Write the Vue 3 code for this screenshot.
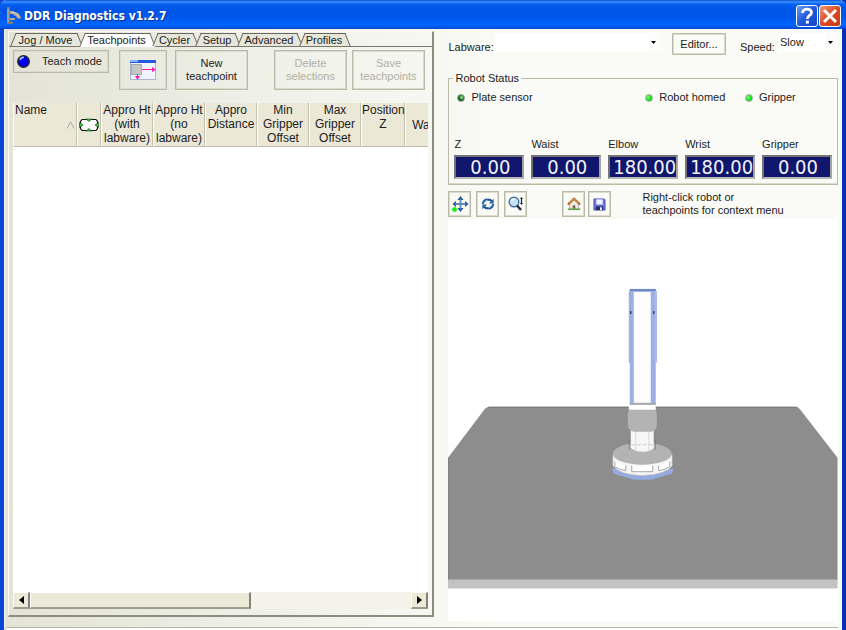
<script setup>
import { ref } from 'vue'

const tabs = ['Jog / Move', 'Teachpoints', 'Cycler', 'Setup', 'Advanced', 'Profiles']
const activeTab = ref('Teachpoints')
const labware = ref('')
const speed = ref('Slow')

const columns = [
  ['Appro Ht', '(with', 'labware)'],
  ['Appro Ht', '(no', 'labware)'],
  ['Appro', 'Distance'],
  ['Min', 'Gripper', 'Offset'],
  ['Max', 'Gripper', 'Offset'],
  ['Position', 'Z'],
]

const axes = [
  { name: 'Z', value: '0.00' },
  { name: 'Waist', value: '0.00' },
  { name: 'Elbow', value: '180.00' },
  { name: 'Wrist', value: '180.00' },
  { name: 'Gripper', value: '0.00' },
]
</script>

<template>
  <div class="window">
    <header class="titlebar">
      <svg class="app-icon" width="16" height="18" viewBox="0 0 16 18">
        <path d="M1 0h3v14l3 1v2H1z" fill="#777d86" />
        <path d="M2 2v13" stroke="#c9c0ac" fill="none" />
        <path d="M4 4h4v3H4zM8 5l4 1 3 4-1 2-3-1-1-2-3-1z" fill="#b3aa9b" />
        <path d="M4 11h5v2H4z" fill="#b3aa9b" /><path d="M5 5l5 1 3 4" stroke="#ddd2bd" fill="none" />
      </svg>
      <h1>DDR Diagnostics v1.2.7</h1>
      <button class="caption help" aria-label="Help">
        <svg width="20" height="20" viewBox="0 0 20 20"><path d="M5.500 7c0-5 9-5 9-.5 0 3-4.200 3-4.200 6.500" fill="none" stroke="#fff" stroke-width="2.800" /><rect x="8.800" y="14.600" width="3" height="3" fill="#fff" /></svg>
      </button>
      <button class="caption close" aria-label="Close">
        <svg width="20" height="20" viewBox="0 0 20 20"><path d="M4 4l12 12M16 4L4 16" stroke="#fff" stroke-width="3" /></svg>
      </button>
    </header>

    <main class="body">
      <section class="notebook">
        <nav class="tabs" role="tablist">
          <button v-for="t in tabs" :key="t" role="tab" class="tab" :class="{ active: t === activeTab }" :aria-selected="t === activeTab" @click="activeTab = t"><span>{{ t }}</span></button>
        </nav>
        <div class="page">
          <div class="actions">
            <button class="btn teach">
              <svg width="15" height="15" viewBox="0 0 15 15"><circle cx="7.500" cy="7.500" r="6.500" fill="#25252d" /><circle cx="7.500" cy="7.500" r="5" fill="#0000f0" /><path d="M4 6q1-3 4-2.500" stroke="#a5b9ff" stroke-width="1.600" fill="none" /></svg>
              <span>Teach mode</span>
            </button>
            <button class="btn tall picture" aria-label="Approach settings">
              <svg width="28" height="22" viewBox="0 0 28 22">
                <rect x="1.500" y="1.500" width="25" height="19" fill="#f3f3fb" stroke="#aeb5ce" />
                <rect x="1" y="1" width="26" height="3" fill="#2358df" /><rect x="1" y="1" width="8" height="2" fill="#7db4ff" />
                <rect x="2.500" y="5.500" width="10" height="10" fill="#c6c6c6" stroke="#aaa" />
                <path d="M13 10.500h12M8.500 15v5" stroke="#f51bbd" /><path d="M23 8l4 2.500-4 2.500zM6 17h5l-2.500 4z" fill="#f51bbd" />
              </svg>
            </button>
            <button class="btn tall">New<br>teachpoint</button>
            <button class="btn tall apart" disabled>Delete<br>selections</button>
            <button class="btn tall near" disabled>Save<br>teachpoints</button>
          </div>

          <div class="grid">
            <table>
              <colgroup><col class="c-name"><col class="c-icon"><col v-for="n in 5" :key="n" class="c-value"><col class="c-pos"><col class="c-pos"></colgroup>
              <thead>
                <tr>
                  <th class="name"><span>Name</span><svg width="9" height="8" viewBox="0 0 9 8"><path d="M1 7.500L4.500.800 8 7.500" fill="none" stroke="#aaa899" /></svg></th>
                  <th class="plate" aria-label="Plate">
                    <svg width="20" height="14" viewBox="0 0 20 14">
                      <path d="M3 1.500h14l1.500 2v7l-1.500 2H3l-1.500-2v-7z" fill="#fff" stroke="#111" stroke-width="1.200" />
                      <path d="M7 1l3 2.500L13 1zM7 13l3-2.500L13 13zM.500 4.500l3.500 2.500-3.500 2.500zM19.500 4.500L16 7l3.500 2.500z" fill="#38c93c" stroke="#163b17" stroke-width=".6" />
                    </svg>
                  </th>
                  <th v-for="(c, i) in columns" :key="i"><template v-for="(line, j) in c" :key="j">{{ line }}<br></template></th>
                  <th class="cut">Waist</th>
                </tr>
              </thead>
            </table>
            <div class="rows"></div>
            <div class="scrollbar">
              <button class="arrow" aria-label="Scroll left"><svg width="5" height="8" viewBox="0 0 5 8"><path d="M5 0v8L0 4z" /></svg></button>
              <div class="track"><div class="thumb"></div></div>
              <button class="arrow" aria-label="Scroll right"><svg width="5" height="8" viewBox="0 0 5 8"><path d="M0 0v8l5-4z" /></svg></button>
            </div>
          </div>
        </div>
      </section>

      <section class="side">
        <div class="options">
          <label for="labware">Labware:</label>
          <span class="combo wide">
            <select id="labware" v-model="labware"><option value=""></option></select>
            <svg width="5" height="3" viewBox="0 0 5 3"><path d="M0 0h5L2.500 3z" /></svg>
          </span>
          <button class="btn editor">Editor...</button>
          <label for="speed">Speed:</label>
          <span class="combo">
            <select id="speed" v-model="speed"><option>Slow</option><option>Medium</option><option>Fast</option></select>
            <svg width="5" height="3" viewBox="0 0 5 3"><path d="M0 0h5L2.500 3z" /></svg>
          </span>
        </div>

        <fieldset class="status">
          <legend>Robot Status</legend>
          <div class="leds">
            <span class="led dark"><i></i>Plate sensor</span>
            <span class="led"><i></i>Robot homed</span>
            <span class="led"><i></i>Gripper</span>
          </div>
          <div class="axes">
            <div v-for="a in axes" :key="a.name" class="axis">
              <span>{{ a.name }}</span>
              <output class="lcd" :class="{ full: a.value.length > 5 }" :aria-label="a.name">{{ a.value }}</output>
            </div>
          </div>
        </fieldset>

        <div class="toolbar">
          <button class="btn tool" aria-label="Pan">
            <svg width="18" height="18" viewBox="0 0 18 18"><path d="M9.500 3v12M3 9h13" stroke="#255796" stroke-width="1.600" /><path d="M6.500 5l3-4 3 4zM6.500 13l3 4 3-4zM5 6L1.500 9 5 12zM14 6l3.500 3-3.500 3z" fill="#255796" /><path d="M9.500 4v10M4 9h11" stroke="#79a8da" stroke-width=".7" /><path d="M3.500 12L6 14.500 3.500 17 1 14.500z" fill="#10f010" stroke="#10f010" /></svg>
          </button>
          <button class="btn tool" aria-label="Rotate">
            <svg width="14" height="14" viewBox="0 0 16 16"><path d="M2 8Q3 3 8 3q3 0 4.500 2M14 8q-1 5-6 5-3 0-4.500-2" fill="none" stroke="#205398" stroke-width="2.400" /><path d="M14.500 2v5.500H9zM1.500 14V8.500H7z" fill="#2864a8" /><path d="M3 7q1-3 5-3.500M13 9q-1 3-5 3.500" fill="none" stroke="#85bce8" /></svg>
          </button>
          <button class="btn tool" aria-label="Zoom">
            <svg width="18" height="18" viewBox="0 0 18 18"><circle cx="7" cy="7" r="4.800" fill="#c4e2f6" stroke="#456f9a" stroke-width="1.400" /><path d="M10 10.500l4 4.500" stroke="#26313f" stroke-width="2.600" /><path d="M4.500 6Q5 4 7.500 4" fill="none" stroke="#fff" stroke-width="1.300" /><path d="M14.500 3v6" stroke="#222" stroke-width="1.200" /><path d="M13 4l1.500-2L16 4zM13 8l1.500 2L16 8z" fill="#222" /></svg>
          </button>
          <button class="btn tool home" aria-label="Home">
            <svg width="14" height="14" viewBox="0 0 16 16"><path d="M3 8l5-5 5 5v6H3z" fill="#eeebe0" stroke="#9c9990" stroke-width=".8" /><path d="M1 8.500L8 2l7 6.500" fill="none" stroke="#a86625" stroke-width="2.400" /><path d="M2.500 7L8 2l5.500 5" fill="none" stroke="#e9aa60" /><path d="M6.500 14V9.500h3V14z" fill="#756756" /><path d="M1 14h14" stroke="#6ca64d" stroke-width="2" /></svg>
          </button>
          <button class="btn tool save" aria-label="Save">
            <svg width="13" height="13" viewBox="0 0 14 14"><path d="M1 1h11l1 1v11H1z" fill="#6d78d6" stroke="#4a55b4" /><path d="M3.500 1.500h7V7h-7z" fill="#eef2ff" /><path d="M3 9h8v4H3z" fill="#252c64" /><path d="M7.500 10h2v3h-2z" fill="#f5f5ff" /></svg>
          </button>
          <p>Right-click robot or<br>teachpoints for context menu</p>
        </div>

        <div class="view">
          <svg viewBox="0 0 390 402" role="img" aria-label="Robot view">
            <path d="M0 239L37 190Q39 188 42 188H346Q350 188 352 190L390 239V361H0z" fill="#8d8d8d" />
            <path d="M40 188.500H350" stroke="#777" stroke-width="1" />
            <path d="M0 361H390V370H0z" fill="#c3c3c3" /><path d="M0 361H390" stroke="#a8a8a8" /><path d="M0 361V239" stroke="#777" />
            <path d="M164 250l2 5 14 4 6 2h18l6-2 14-4 2-5z" fill="#94aae0" />
            <path d="M165 236v11q6 9 29.500 10 24-1 30-10v-11z" fill="#f5f5f5" stroke="#aaa" stroke-width=".6" />
            <path d="M167 243v5q4 3 11 4v-5M222 243v5q-4 3-11 4v-5M184 247v6h21v-6" fill="#fff" stroke="#a5a5a5" />
            <ellipse cx="194.500" cy="235" rx="29.500" ry="11" fill="#b3b3b3" />
            <path d="M183 208v21q4 4 12 4t11-4v-21z" fill="#f6f6f6" /><path d="M188 212v20M201 212v20" stroke="#d9d9d9" /><path d="M183 226h23" stroke="#ccc" stroke-dasharray="4 2" />
            <path d="M181.500 221v10M207.500 221v10" stroke="#777" stroke-width=".8" />
            <path d="M181 191h27l1 4v12q-1 6-6 6h-17q-5-1-6-6v-12z" fill="#b3b3b3" />
            <path d="M181 185h27v6h-27z" fill="#fff" />
            <path d="M182 70h26v116h-26z" fill="#9cb0e4" /><path d="M186 73h17v112h-17z" fill="#fdfdfd" />
            <path d="M181.500 72v72M208.500 72v72" stroke="#8da3d8" />
            <path d="M182 71h26" stroke="#6f87bd" stroke-width="2" /><path d="M183 92v3M206 92v3" stroke="#35466d" stroke-width="1.500" /><path d="M182 185h26" stroke="#aaa" stroke-width="2" />
          </svg>
        </div>
      </section>
    </main>
    <footer class="log"></footer>
  </div>
</template>

<style>
body { margin: 0; }
</style>

<style scoped>
* { box-sizing: border-box; }
.window {
  min-height: 100vh;
  display: flex;
  flex-direction: column;
  font: 11px/13px "Liberation Sans", Arial, sans-serif;
  color: #1c1c1c;
  border: solid #0746d6;
  border-width: 0 4px;
  border-right-color: #0330b8;
  background: linear-gradient(90deg, #e3e4d6, #fafbf6 60%);
}
button, select { font: inherit; color: inherit; margin: 0; padding: 0; border: 0; }
svg { display: block; }
.titlebar {
  height: 29px;
  margin: 0 -4px;
  padding: 3px 5px 0 6px;
  display: flex;
  align-items: center;
  background: linear-gradient(#0a4fd5, #3a92ff 2px, #0560f2 4px, #0054e5 10px, #0058ee 18px, #0066ff 25px, #0047d0);
  border-radius: 6px 6px 0 0;
}
h1 { flex: 1; margin: 0 0 0 2px; color: #fff; font: bold 12px/16px "DejaVu Sans Condensed", sans-serif; text-shadow: 1px 1px #0b318f; }
.caption {
  width: 22px;
  height: 22px;
  margin-left: 1px;
  border: 1px solid #fff;
  border-radius: 3px;
  background: linear-gradient(135deg, #6b9bf5, #2158db 50%, #1747c4);
}
.close { background: linear-gradient(135deg, #f09a7e, #dd4a25 50%, #c53a13); }
.body { flex: 1; display: grid; grid-template-columns: 426fr 390fr; gap: 14px; padding: 2px 4px 6px; border-left: 1px solid #f5f3e5; }
.body > * { min-width: 0; }
.notebook {
  margin: 0 0 4px -1px;
  display: flex;
  flex-direction: column;
  border: 1px solid #fbfbf7;
  border-right: 2px solid #8f8c7d;
  border-bottom: 2px solid #8f8c7d;
}
.tabs { height: 14px; margin-top: 1px; padding-left: 2px; display: grid; grid-template-columns: 69px 73px 43px 42px 62px 48px; border-bottom: 1px solid #77776c; }
.tab { position: relative; height: 14px; background: none; line-height: 14px; white-space: nowrap; }
.tab span { position: relative; z-index: 1; display: block; }
.tab::before, .tab::after { content: ""; position: absolute; top: 0; bottom: 1px; border-top: 1px solid #66665e; background: #e6e7da; }
.tab::before { left: 2px; right: 50%; border-left: 1px solid #66665e; transform: skewX(-22deg); }
.tab::after { right: 0; left: 40%; border-right: 1px solid #66665e; transform: skewX(22deg); }
.tab.active::before, .tab.active::after { background: #fff; bottom: 0; }
.page { flex: 1; display: flex; flex-direction: column; padding: 3px 4px 6px; }
.actions { display: flex; align-items: flex-start; gap: 8px; height: 53px; }
.btn { border: 1px solid #babaa8; border-radius: 0; background: transparent; box-shadow: inset 0 0 0 1px #dadacd; white-space: nowrap; }
.teach { width: 96px; height: 23px; margin: 0 2px 0 0; display: flex; align-items: center; padding: 0 2px; gap: 11px; }
.tall { width: 73px; height: 40px; }
.picture { width: 48px; display: grid; place-items: center; }
.apart { margin-left: 18px; }
.near { margin-left: -3px; }
.btn:disabled { color: #b0b0a3; }
.grid { flex: 1; display: flex; flex-direction: column; min-width: 0; overflow: hidden; background: #fff; }
table { table-layout: fixed; width: 436px; border-collapse: separate; border-spacing: 0; background: #ebe8d8; }
.c-name { width: 64px; }
.c-icon { width: 24px; }
.c-value { width: 52px; }
.c-pos { width: 44px; }
th { height: 44px; padding: 0; border-right: 1px solid #c4c1b1; border-left: 1px solid #fff; border-bottom: 1px solid #bdbaa9; font-size: 12px; line-height: 14px; font-weight: 400; vertical-align: top; white-space: nowrap; }
th.name { text-align: left; padding-left: 1px; }
.name svg { margin: 4px 1px 0 auto; }
th.plate, th.cut { vertical-align: middle; }
.plate svg { margin: auto; }
.rows { flex: 1; }
.scrollbar { height: 17px; display: flex; background: #f4f3ea; }
.arrow { width: 17px; display: grid; place-items: center; background: #ece9d8; border: 1px solid #fff; border-right: 2px solid #858276; border-bottom: 2px solid #9d9a8b; }
.track { flex: 1; }
.thumb { width: 58%; height: 17px; background: #ece9d8; border: 1px solid #fff; border-right: 2px solid #858276; border-bottom: 2px solid #9d9a8b; }
.side { display: flex; flex-direction: column; }
.options { display: flex; align-items: flex-start; height: 41px; padding-top: 2px; }
.options label { width: 47px; padding-top: 8px; white-space: nowrap; }
.combo { position: relative; width: 60px; height: 19px; }
.combo.wide { flex: 1; }
.combo select { width: 100%; height: 19px; appearance: none; background: #fff; padding: 0 2px; border-right: 12px solid #fcfcfa; border-radius: 0; }
.combo svg { position: absolute; right: 5px; top: 8px; pointer-events: none; }
.editor { width: 54px; height: 22px; margin: 0 14px 0 11px; }
.options .editor ~ label { width: 38px; }
.status { margin: 0; padding: 0 5px 4px; border: 1px solid #babaa8; box-shadow: inset 0 -1px #dadacd; min-width: 0; height: 113px; }
legend { margin-left: -1px; padding: 0 2px; }
.leds { display: grid; grid-template-columns: 190fr 101fr 91fr; margin-top: 6px; }
.led { display: flex; align-items: center; gap: 6px; padding-left: 3px; }
.led i { width: 8px; height: 8px; border-radius: 50%; border: 1px solid #a7aca7; background: radial-gradient(circle at 35% 35%, #75ff75, #08df16 60%); }
.led.dark i { border-color: #8b9a8b; background: radial-gradient(circle at 60% 40%, #aee0ad, #08620e 55%); }
.axes { margin-top: 34px; display: grid; grid-template-columns: repeat(5, 1fr); gap: 7px; }
.axis span { display: block; height: 17px; }
.lcd { height: 24px; display: flex; justify-content: flex-end; padding-right: 12px; background: #10166b; border: 2px solid; border-color: #747474 #a4a4a4 #b8b8b8 #747474; color: #f2f2fa; font: 20px/20px "DejaVu Sans Condensed", sans-serif; }
.lcd.full { padding-right: 0; }
.toolbar { display: flex; padding: 6px 0 2px; gap: 5px; }
.tool { width: 23px; height: 26px; display: grid; place-items: center; }
.home { margin-left: 30px; }
.save { margin-left: -2px; }
.toolbar p { margin: 0 0 0 26px; white-space: nowrap; }
.view { flex: 1; background: #fff; }
.view svg { width: 100%; height: auto; }
.log { height: 3px; margin: 0 4px 0 3px; border-top: 1px solid #b8b5a6; background: #fff; }
</style>
